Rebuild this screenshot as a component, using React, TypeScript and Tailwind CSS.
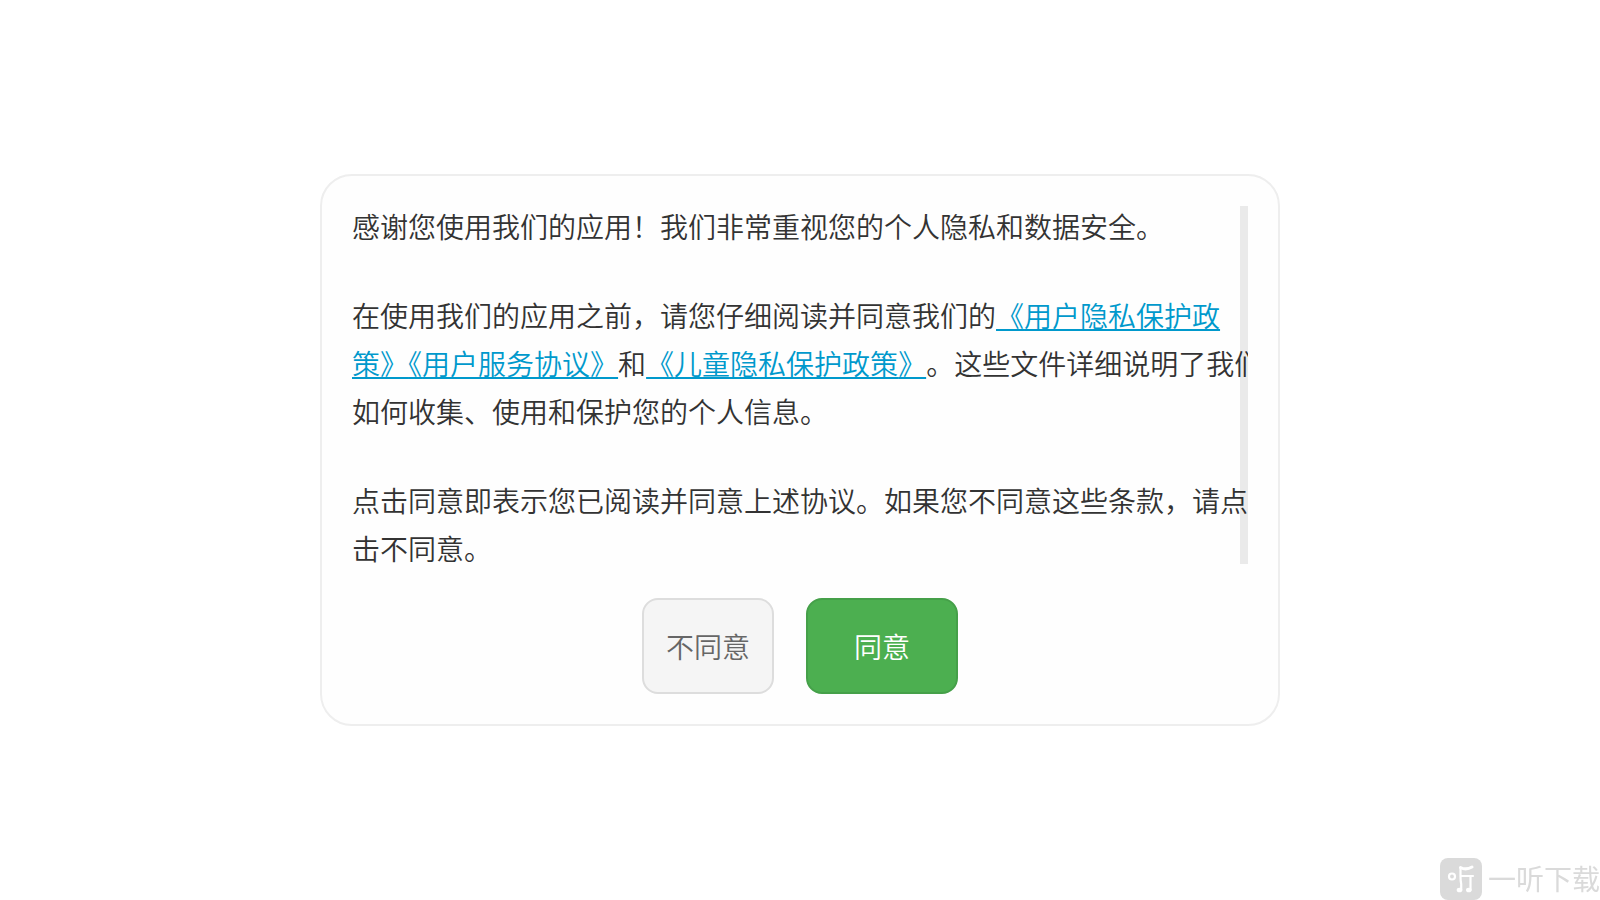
interface AgreementLinkProps {
  href: string;
  title: string;
  tight?: boolean;
}

// tight: opening bracket takes half a cell when it follows a closing one
function AgreementLink({ href, title, tight = false }: AgreementLinkProps) {
  return (
    <a href={href} className="text-[#0099cc] underline">
      {tight ? <span className="[font-feature-settings:'halt']">《</span> : "《"}
      {title}》
    </a>
  );
}

function SiteMark() {
  return (
    <div className="fixed right-0 bottom-0 flex items-start gap-1.5 text-[#dadada]">
      <svg width="42" height="42" viewBox="0 0 42 42" aria-hidden="true">
        <rect width="42" height="42" rx="8" fill="currentColor" />
        <g fill="none" stroke="#fff" strokeLinecap="round" strokeLinejoin="round">
          <circle cx="12" cy="18.5" r="3" strokeWidth="2.2" />
          <path d="M20.5 9.5Q26 12.5 32 9" strokeWidth="3" />
          <path d="M20.5 10v8q0 5 .7 8v6" strokeWidth="2.2" />
          <path d="M21 18h12M30.5 18v14" strokeWidth="2.2" />
        </g>
        <ellipse cx="19.5" cy="32" rx="2.8" ry="2.3" fill="#fff" />
        <ellipse cx="28.8" cy="32" rx="2.8" ry="2.3" fill="#fff" />
      </svg>
      <span className="text-[28px] leading-10 font-normal">一听下载</span>
    </div>
  );
}

export default function App() {
  return (
    <div className="flex min-h-screen items-center justify-center bg-white font-['Noto_Sans_CJK_SC',sans-serif] text-[28px] font-[350] text-[#333] [text-spacing-trim:space-all]">
      <main className="w-3/5 rounded-[32px] border-2 border-[#eee] bg-[#fefefe] p-[30px]">
        <div className="relative h-[358px] overflow-hidden">
          <div className="-mt-1 -mr-4 flex flex-col gap-[41px] leading-[48px]">
            <p>感谢您使用我们的应用！我们非常重视您的个人隐私和数据安全。</p>
            <p>
              在使用我们的应用之前，请您仔细阅读并同意我们的
              <AgreementLink href="#privacy" title="用户隐私保护政策" />
              <AgreementLink href="#terms" title="用户服务协议" tight />和
              <AgreementLink href="#children" title="儿童隐私保护政策" />
              。这些文件详细说明了我们如何收集、使用和保护您的个人信息。
            </p>
            <p>点击同意即表示您已阅读并同意上述协议。如果您不同意这些条款，请点击不同意。</p>
          </div>
          <div className="absolute inset-y-0 right-0 w-2 bg-black/8" />
        </div>
        <div className="mt-[34px] flex justify-center gap-8">
          <button
            type="button"
            className="h-24 w-[132px] rounded-2xl border-2 border-[#ddd] bg-[#f5f5f5] text-[#666]"
          >
            不同意
          </button>
          <button
            type="button"
            className="h-24 w-[152px] rounded-2xl border-2 border-[#45a049] bg-[#4caf50] text-white"
          >
            同意
          </button>
        </div>
      </main>
      <SiteMark />
    </div>
  );
}
